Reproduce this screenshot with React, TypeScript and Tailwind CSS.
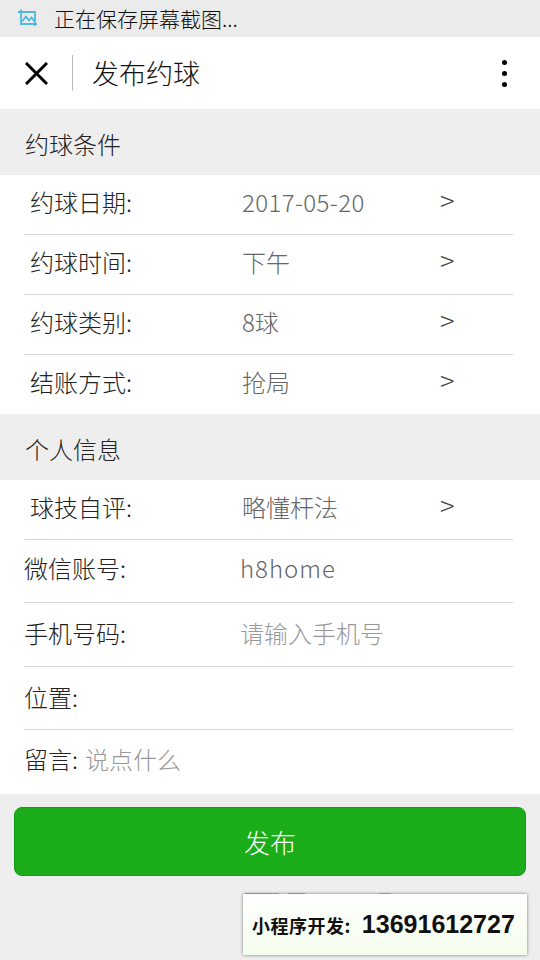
const font = { fontFamily: '"Noto Sans CJK SC", Roboto, sans-serif' };

function PickerRow({ label, value, latin, last }: { label: string; value: string; latin?: boolean; last?: boolean }) {
  return (
    <div className={`ml-6 mr-[27px] flex items-center ${last ? "h-[59px]" : "h-[60px] border-b border-[#d4d4d4]"}`}>
      <div className="w-[218px] pl-[6px] text-[24px] leading-none text-[#222] font-light pb-[6px]">{label}</div>
      <div className={`w-[198px] text-[24px] leading-none text-[#666] font-light pb-[6px] ${latin ? "tracking-[0.4px]" : ""}`}>{value}</div>
      <div className="text-[27px] leading-none text-[#444] font-light pb-[10px]">&gt;</div>
    </div>
  );
}

function InputRow({ label, value, muted, latin, h, pb }: { label: string; value?: string; muted?: boolean; latin?: boolean; h: string; pb: string }) {
  return (
    <div className={`ml-6 mr-[27px] flex items-center border-b border-[#d4d4d4] ${h}`}>
      <div className={`w-[216px] text-[24px] leading-none text-[#222] font-light ${pb}`}>{label}</div>
      {value && (
        <div className={`text-[24px] leading-none font-light ${pb} ${muted ? "text-[#999]" : "text-[#666]"} ${latin ? "tracking-[1px]" : ""}`}>{value}</div>
      )}
    </div>
  );
}

function Section({ title }: { title: string }) {
  return <div className="h-[66px] bg-[#eeeeee] pl-[25px] pt-[3px] flex items-center text-[24px] leading-none text-[#222] font-light">{title}</div>;
}

export default function App() {
  return (
    <div className="w-[540px] h-[960px] overflow-hidden bg-[#eeeeee] flex flex-col" style={font}>
      <div className="h-[37px] bg-[#ebebeb] flex items-center pl-[17px] shrink-0">
        <svg width="22" height="20" viewBox="0 0 22 20" fill="none" stroke="#4db8e0" strokeWidth="1.8">
          <path d="M1 3h3M4 0.5V15h16M4 3h14v14" />
          <path d="M5 12.5l4-5 3 4 2.5-3 3 4" />
        </svg>
        <span className="ml-[15px] text-[21px] leading-none text-[#111] font-light">正在保存屏幕截图...</span>
      </div>

      <div className="h-[72px] bg-white flex items-center shrink-0">
        <svg className="ml-[25px]" width="23" height="23" viewBox="0 0 23 23" stroke="#000" strokeWidth="3" fill="none">
          <path d="M1 1l21 21M22 1L1 22" />
        </svg>
        <div className="ml-[24px] w-px h-[36px] bg-[#bbbbbb]" />
        <div className="ml-[19px] text-[27px] leading-none text-[#111] font-light flex-1 pb-[2px]">发布约球</div>
        <div className="mr-[33px] flex flex-col gap-[6px]">
          <div className="w-[5px] h-[5px] rounded-full bg-black" />
          <div className="w-[5px] h-[5px] rounded-full bg-black" />
          <div className="w-[5px] h-[5px] rounded-full bg-black" />
        </div>
      </div>

      <Section title="约球条件" />
      <div className="bg-white">
        <PickerRow label="约球日期:" value="2017-05-20" latin />
        <PickerRow label="约球时间:" value="下午" />
        <PickerRow label="约球类别:" value="8球" />
        <PickerRow label="结账方式:" value="抢局" last />
      </div>

      <Section title="个人信息" />
      <div className="bg-white">
        <PickerRow label="球技自评:" value="略懂杆法" />
        <InputRow label="微信账号:" value="h8home" latin h="h-[63px]" pb="pb-[7px]" />
        <InputRow label="手机号码:" value="请输入手机号" muted h="h-[64px]" pb="pb-[4px]" />
        <InputRow label="位置:" h="h-[63px]" pb="pb-[2px]" />
        <div className="ml-6 mr-6 h-[64px] flex items-center text-[24px] leading-none font-light pb-[6px]">
          <span className="text-[#222]">留言:</span>
          <span className="ml-[7px] text-[#999]">说点什么</span>
        </div>
      </div>

      <div className="mt-[13px] mx-[14px] h-[69px] shrink-0 rounded-[8px] bg-[#1aad19] border border-[#179b16] flex items-center justify-center text-white text-[26px] leading-none font-light">
        发布
      </div>

      <div className="relative mt-[18px] ml-[243px] w-[284px] h-[61px] bg-gradient-to-b from-white to-[#f4fdec] shadow-[0_0_3px_rgba(0,0,0,0.5)] flex items-center pl-[9px] text-[#111]">
        <div className="absolute left-[2px] -top-[1px] w-[34px] h-[1px] bg-[#5fa89c]" />
        <div className="absolute left-[45px] -top-[1px] w-[17px] h-[1px] bg-[#5fa89c]" />
        <div className="absolute left-[136px] -top-[1px] w-[12px] h-[1px] bg-[#8fa860]" />
        <span className="text-[18px] leading-none font-bold tracking-[0.5px]">小程序开发:</span>
        <span className="ml-[11px] text-[25px] leading-none font-bold" style={{ fontFamily: '"Liberation Sans", sans-serif' }}>13691612727</span>
      </div>
    </div>
  );
}
